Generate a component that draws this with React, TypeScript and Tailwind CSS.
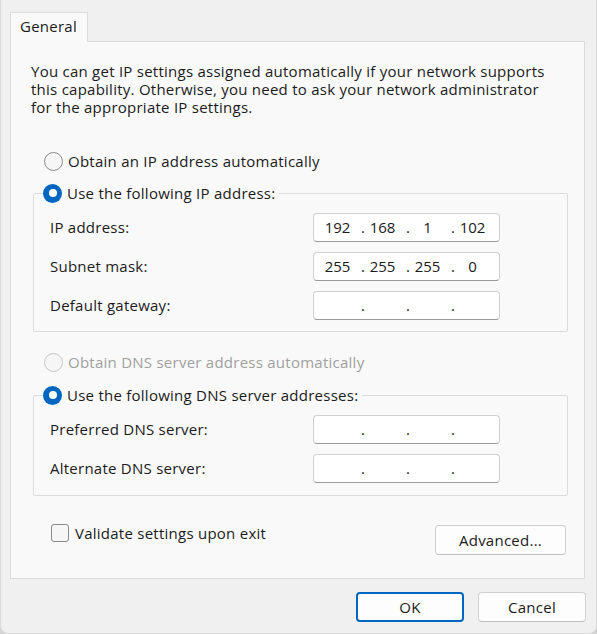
import React from 'react';

const font = { fontFamily: '"Open Sans", "Noto Sans", sans-serif' };

function Radio({ checked, disabled }: { checked?: boolean; disabled?: boolean }) {
  if (checked) {
    return (
      <span className="w-[19px] h-[19px] rounded-full bg-[#0067c0] flex items-center justify-center shrink-0">
        <span className="w-[8px] h-[8px] rounded-full bg-white" />
      </span>
    );
  }
  return (
    <span
      className={`w-[19px] h-[19px] rounded-full border bg-[#f6f6f6] shrink-0 ${disabled ? 'border-[#c6c6c6]' : 'border-[#8a8a8a]'}`}
    />
  );
}

function IpField({ parts }: { parts: string[] }) {
  return (
    <div className="w-[187px] h-[29px] border border-[#d0d0d0] border-b-[#9a9a9a] rounded-[4px] bg-white flex items-center pl-[6px] tracking-normal">
      {parts.map((p, i) => (
        <React.Fragment key={i}>
          <span className="w-[35px] text-center">{p}</span>
          {i < 3 && <span className="w-[10px] pl-[6px]">.</span>}
        </React.Fragment>
      ))}
    </div>
  );
}

function FieldRow({ label, parts }: { label: string; parts: string[] }) {
  return (
    <div className="flex items-center justify-between h-[29px] pl-[16px] pr-[67px]">
      <span>{label}</span>
      <IpField parts={parts} />
    </div>
  );
}

export default function App() {
  const empty = ['', '', '', ''];
  return (
    <div className="w-[597px] h-[634px] bg-[#d4d4d4]">
      <div
        className="w-[597px] h-[634px] bg-[#f0f0f0] rounded-b-[8px] border-x border-b border-[#dadada] text-[15px] tracking-[0.25px] text-[#1b1b1b] flex flex-col"
        style={font}
      >
        <div className="pt-[12px] pl-[9px]">
          <div className="w-[78px] h-[30px] border border-b-0 border-[#dcdcdc] bg-[#f9f9f9] flex items-center pl-[9px] pb-[2px] relative z-10 -mb-[1px]">
            General
          </div>
        </div>
        <div className="ml-[9px] w-[575px] h-[538px] border border-[#dcdcdc] bg-[#f9f9f9] flex flex-col">
          <p className="mt-[20px] pl-[20px] leading-[18px]">
            You can get IP settings assigned automatically if your network supports
            <br />
            this capability. Otherwise, you need to ask your network administrator
            <br />
            for the appropriate IP settings.
          </p>

          <div className="mt-[35px] ml-[33px] h-[20px] flex items-center gap-[5px]">
            <Radio />
            <span>Obtain an IP address automatically</span>
          </div>

          <fieldset className="mt-[12px] ml-[22px] w-[535px] h-[149px] border border-[#dcdcdc] rounded-[2px] pt-[10px] flex flex-col gap-[10px]">
            <legend className="ml-[9px] pr-[4px] h-[20px] flex items-center gap-[5px]">
              <Radio checked />
              <span>Use the following IP address:</span>
            </legend>
            <FieldRow label="IP address:" parts={['192', '168', '1', '102']} />
            <FieldRow label="Subnet mask:" parts={['255', '255', '255', '0']} />
            <FieldRow label="Default gateway:" parts={empty} />
          </fieldset>

          <div className="mt-[20px] ml-[33px] h-[20px] flex items-center gap-[5px] text-[#a0a0a0]">
            <Radio disabled />
            <span>Obtain DNS server address automatically</span>
          </div>

          <fieldset className="mt-[13px] ml-[22px] w-[535px] h-[111px] border border-[#dcdcdc] rounded-[2px] pt-[10px] flex flex-col gap-[10px]">
            <legend className="ml-[9px] pr-[4px] h-[20px] flex items-center gap-[5px]">
              <Radio checked />
              <span>Use the following DNS server addresses:</span>
            </legend>
            <FieldRow label="Preferred DNS server:" parts={empty} />
            <FieldRow label="Alternate DNS server:" parts={empty} />
          </fieldset>

          <div className="mt-[29px] flex items-center justify-between pl-[40px] pr-[18px]">
            <div className="flex items-center gap-[6px] -mt-[14px]">
              <span className="w-[18px] h-[18px] border border-[#8a8a8a] rounded-[3px] bg-[#f6f6f6]" />
              <span>Validate settings upon exit</span>
            </div>
            <button className="w-[131px] h-[30px] border border-[#d0d0d0] border-b-[#c0c0c0] rounded-[4px] bg-[#fdfdfd]">
              Advanced...
            </button>
          </div>
        </div>
        <div className="mt-[13px] flex justify-end gap-[14px] pr-[10px]">
          <button className="w-[108px] h-[30px] border-2 border-[#0067c0] rounded-[4px] bg-[#fdfdfd]">OK</button>
          <button className="w-[108px] h-[30px] border border-[#d0d0d0] border-b-[#c0c0c0] rounded-[4px] bg-[#fdfdfd]">Cancel</button>
        </div>
      </div>
    </div>
  );
}
